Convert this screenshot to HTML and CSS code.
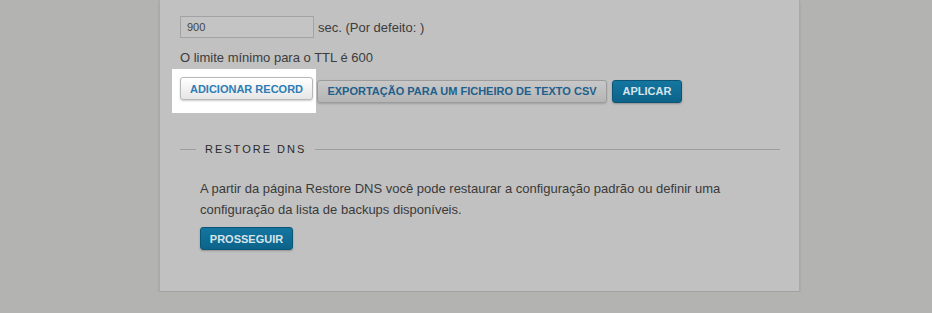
FILE: index.html
```html
<!DOCTYPE html>
<html lang="pt">
<head>
    <meta charset="UTF-8">
    <title>DNS</title>
    <link rel="stylesheet" href="styles.css">
</head>
<body>
    <div class="panel">
        <div class="ttl-row">
            <input class="ttl-input" type="text" value="900">
            <span class="ttl-unit">sec. (Por defeito: )</span>
        </div>
        <p class="ttl-hint">O limite mínimo para o TTL é 600</p>

        <div class="button-row">
            <div class="spotlight">
                <button class="btn btn-light">ADICIONAR RECORD</button>
            </div>
            <button class="btn btn-grey">EXPORTAÇÃO PARA UM FICHEIRO DE TEXTO CSV</button>
            <button class="btn btn-blue">APLICAR</button>
        </div>

        <fieldset class="restore">
            <legend>RESTORE DNS</legend>
            <p class="restore-text">A partir da página Restore DNS você pode restaurar a configuração padrão ou definir uma configuração da lista de backups disponíveis.</p>
            <button class="btn btn-blue">PROSSEGUIR</button>
        </fieldset>
    </div>
</body>
</html>
```

FILE: styles.css
```css
/* Page */
body {
    margin: 0;
    background-color: #b3b3b1;
    font-family: "Liberation Sans", Arial, sans-serif;
    color: #3a3a3a;
}

/* Main panel */
.panel {
    margin-left: 159px;
    width: 641px;
    height: 292px;
    box-sizing: border-box;
    padding: 16px 20px 0 20px;
    background-color: #c1c1c1;
    border-left: 1px solid #a9a9a9;
    border-right: 1px solid #a9a9a9;
    border-bottom: 1px solid #a2a2a2;
    box-shadow: 0 2px 2px rgba(0,0,0,0.12);
}

.ttl-row {
    display: flex;
    align-items: center;
    gap: 4px;
    height: 22px;
}

.ttl-input {
    width: 134px;
    height: 22px;
    box-sizing: border-box;
    margin: 0;
    padding: 2px 6px;
    border: 1px solid #a3a3a3;
    background-color: #c4c4c4;
    font-family: "Liberation Sans", Arial, sans-serif;
    font-size: 11px;
    color: #444;
}

.ttl-unit {
    font-size: 13px;
    color: #3c3c3c;
}

.ttl-hint {
    margin: 12px 0 0 0;
    font-size: 13px;
    line-height: 15px;
    color: #3c3c3c;
}

/* Buttons */
.button-row {
    display: flex;
    align-items: center;
    margin-top: 4px;
    margin-left: -8px;
}

.spotlight {
    background-color: #ffffff;
    padding: 8px 3px 13px 8px;
    margin-right: 1px;
}

.btn {
    height: 23px;
    margin: 0;
    padding: 0 8px;
    box-sizing: border-box;
    border-radius: 3px;
    font-family: "Liberation Sans", Arial, sans-serif;
    font-size: 11px;
    font-weight: bold;
    cursor: pointer;
}

.btn-light {
    width: 133px;
    border: 1px solid #b8b8b8;
    background: linear-gradient(#ffffff, #e6e6e6);
    color: #2d7db5;
    box-shadow: 0 1px 2px rgba(0,0,0,0.2);
}

.btn-grey {
    width: 290px;
    border: 1px solid #9c9c9c;
    background: linear-gradient(#c8c8c8, #b5b5b5);
    color: #215f8c;
    box-shadow: 0 1px 2px rgba(0,0,0,0.18);
}

.btn-blue {
    border: 1px solid #0b5576;
    background: linear-gradient(#1476a0, #0c6389);
    color: #d6e4ec;
    box-shadow: 0 1px 2px rgba(0,0,0,0.25);
}

.button-row .btn-blue {
    width: 70px;
    margin-left: 5px;
}

/* Restore DNS section */
.restore {
    margin: 30px 0 0 0;
    padding: 23px 20px 0 20px;
    border: none;
    border-top: 1px solid #9e9e9e;
    width: 600px;
    box-sizing: border-box;
}

.restore legend {
    margin-left: -4px;
    padding: 0 9px;
    font-size: 11px;
    letter-spacing: 2px;
    color: #2a2a2a;
}

.restore-text {
    margin: 0 0 7px 0;
    font-size: 13px;
    line-height: 21px;
    color: #3a3a3a;
}

.restore .btn-blue {
    width: 93px;
}
```
